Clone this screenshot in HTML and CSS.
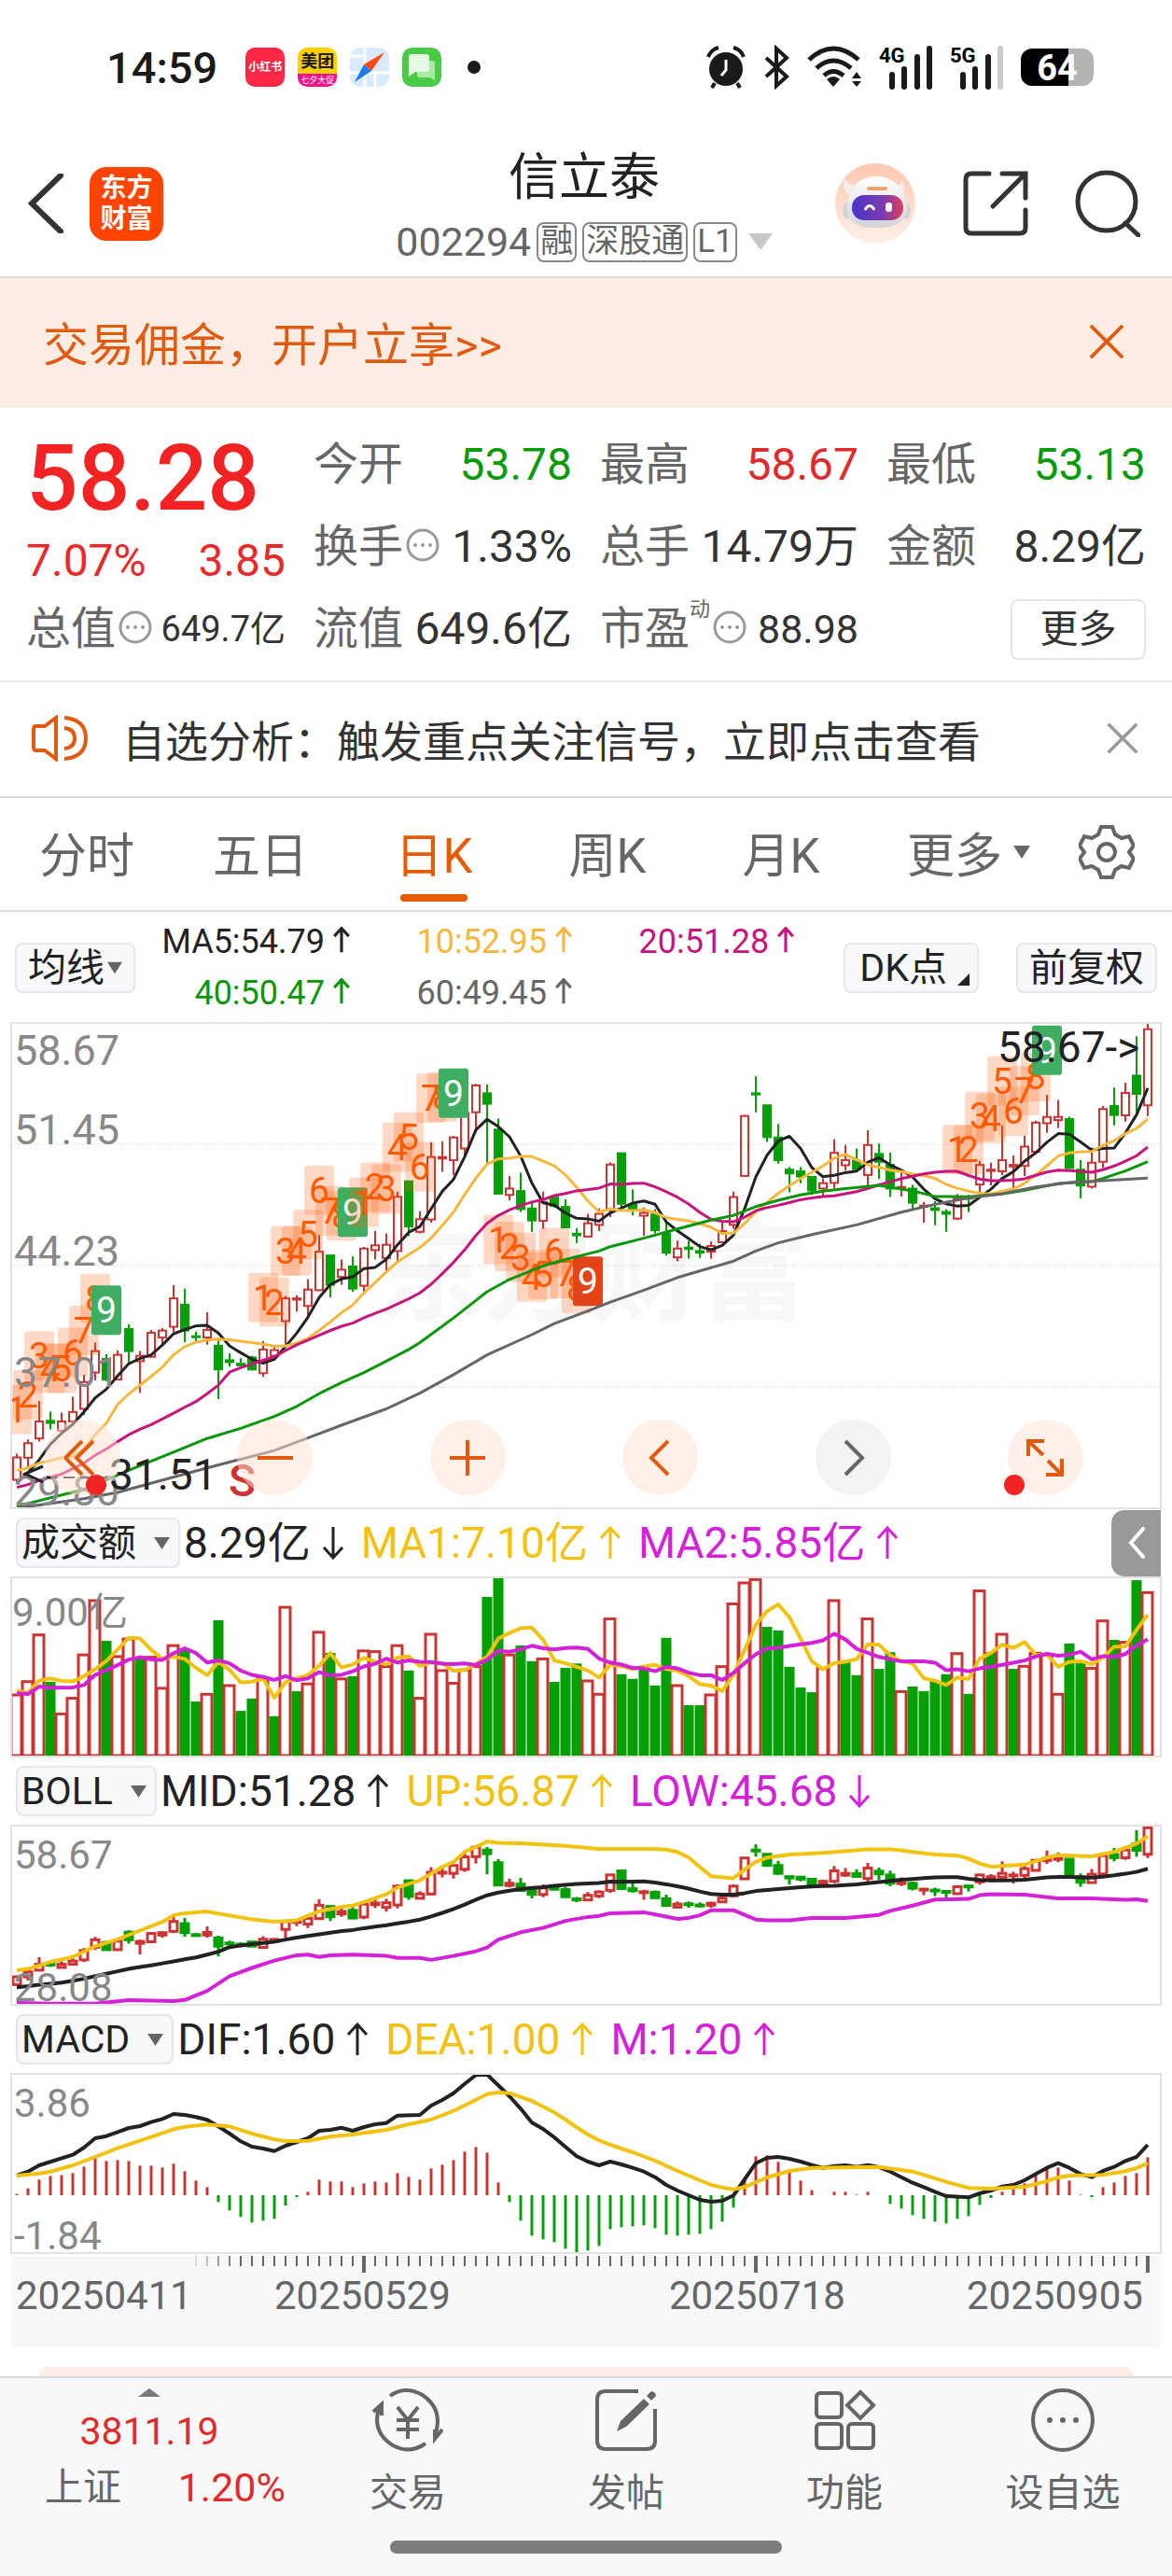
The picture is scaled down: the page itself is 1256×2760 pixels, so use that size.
FILE: index.html
```html
<!DOCTYPE html>
<html lang="zh-CN">
  <head>
    <meta charset="UTF-8" />
    <meta name="viewport" content="width=device-width, initial-scale=1.0" />
    <title>信立泰 002294</title>
    <link rel="stylesheet" href="styles.css">
  </head>
  <body>
    <svg class="defs" aria-hidden="true">
      <symbol id="up" viewBox="0 0 24 36"><path d="M12 35V2M2 13L12 2l10 11" /></symbol>
      <symbol id="down" viewBox="0 0 24 36"><path d="M12 1v33M2 23l10 11 10-11" /></symbol>
      <symbol id="info" viewBox="0 0 36 36">
        <circle cx="18" cy="18" r="16" />
        <circle class="dot" cx="10" cy="18" r="2" /><circle class="dot" cx="18" cy="18" r="2" /><circle class="dot" cx="26" cy="18" r="2" />
      </symbol>
      <symbol id="close" viewBox="0 0 40 40"><path d="M2 2l36 36M38 2L2 38" /></symbol>
    </svg>

    <div class="status-bar">
      <span class="time">14:59</span>
      <span class="app app-red">小红书</span>
      <span class="app app-yellow"><b>美团</b><i>七夕大促</i></span>
      <svg class="app" viewBox="0 0 42 42">
        <rect width="42" height="42" rx="10" fill="#d8eafb" />
        <path d="M16 0v42M0 27h42M27 26v16M0 9h14" stroke="#fff" stroke-width="3" />
        <path d="M37 5L15 18l8 7z" fill="#ff4a12" />
        <path d="M5 37l10-19 8 7z" fill="#1b7cf2" />
      </svg>
      <svg class="app" viewBox="0 0 42 42">
        <rect width="42" height="42" rx="10" fill="#4bcb45" />
        <path d="M19 14h13q3 0 3 3v18l-5-3H19q-3 0-3-3V17q0-3 3-3z" fill="#a9e8a5" />
        <path d="M10 7h16q3 0 3 3v13q0 3-3 3H14l-7 5V10q0-3 3-3z" fill="#e6f9e4" />
      </svg>
      <span class="more-dot"></span>
      <div class="status-right">
        <svg width="44" height="46" viewBox="0 0 44 46">
          <circle cx="22" cy="25" r="18" fill="#1a1a1a" />
          <path d="M3 12q3-8 11-10M41 12q-3-8-11-10M10 40l-3 5M34 40l3 5" stroke="#1a1a1a" stroke-width="4" fill="none" />
          <path d="M22 15v11l-5 6" stroke="#fff" stroke-width="3" fill="none" />
        </svg>
        <svg width="28" height="46" viewBox="0 0 28 46"><path d="M3 13l22 20-11 10V3l11 10L3 33" stroke="#1a1a1a" stroke-width="4" fill="none" /></svg>
        <svg width="60" height="46" viewBox="0 0 60 46">
          <path d="M3 15q26-24 53 0M11 24q18-16 37 0M19 32q10-9 21 0" stroke="#1a1a1a" stroke-width="5" fill="none" />
          <path d="M29 44l-7-8q7-6 14 0zM54 28l5 7H49zM54 44l5-6H49z" fill="#1a1a1a" />
        </svg>
        <svg width="58" height="46" viewBox="0 0 58 46">
          <text x="0" y="18" class="net">4G</text>
          <path d="M14 44V31M27 44V25M41 44V12M54 44V3" class="bars" />
        </svg>
        <svg width="58" height="46" viewBox="0 0 58 46">
          <text x="0" y="18" class="net">5G</text>
          <path d="M14 44V31M27 44V25M41 44V12" class="bars" /><path d="M54 44V3" class="bars weak" />
        </svg>
        <span class="battery">64</span>
      </div>
    </div>

    <header class="header">
      <div class="header-left">
        <button aria-label="返回"><svg width="38" height="64" viewBox="0 0 38 64"><path d="M35 2L4 32l31 30" class="ico thick" /></svg></button>
        <a class="logo" href="#">东方<br>财富</a>
      </div>
      <div class="header-title">
        <h1>信立泰</h1>
        <div class="code">
          <span>002294</span><span class="tag">融</span><span class="tag">深股通</span><span class="tag">L1</span>
          <svg width="26" height="18" viewBox="0 0 26 18"><path d="M0 0h26L13 18z" fill="#c8c8c8" /></svg>
        </div>
      </div>
      <div class="header-right">
        <button aria-label="助手">
          <svg width="88" height="88" viewBox="0 0 88 88">
            <defs>
              <linearGradient id="halo" x2="0" y2="1"><stop stop-color="#fdc8b0" /><stop offset="1" stop-color="#fff0e9" /></linearGradient>
              <linearGradient id="head" x2="0" y2="1"><stop stop-color="#ffffff" /><stop offset="1" stop-color="#d3d2d8" /></linearGradient>
              <linearGradient id="visor"><stop stop-color="#4a35c8" /><stop offset="0.6" stop-color="#7a3bb0" /><stop offset="1" stop-color="#e0405e" /></linearGradient>
            </defs>
            <circle cx="44" cy="44" r="43" fill="url(#halo)" />
            <path d="M11 17q-4 12 6 18l8-9q-9-1-14-9zM73 20q5 9-2 16l-8-9q7-1 10-7z" fill="#f3edec" />
            <ellipse cx="14" cy="52" rx="5" ry="9" fill="#d4d3d9" /><ellipse cx="77" cy="52" rx="5" ry="9" fill="#d4d3d9" />
            <path d="M14 50Q15 16 45 15q30 1 33 35-1 20-33 20T14 50z" fill="url(#head)" />
            <rect x="35" y="26" width="22" height="4" rx="2" fill="#eda56d" />
            <rect x="19" y="35" width="55" height="27" rx="13" fill="url(#visor)" />
            <path d="M33 51q5-9 10 0" stroke="#fff" stroke-width="3" fill="none" /><rect x="55" y="43" width="7" height="10" rx="3" fill="#fff" />
          </svg>
        </button>
        <button aria-label="分享">
          <svg width="70" height="70" viewBox="0 0 70 70"><path d="M28 3H9q-6 0-6 6v52q0 6 6 6h52q6 0 6-6V42M42 3h25v26M66 4L32 38" class="ico" /></svg>
        </button>
        <button aria-label="搜索">
          <svg width="70" height="72" viewBox="0 0 70 72"><circle cx="34" cy="34" r="31" class="ico" /><path d="M54 57l14 13" class="ico" /></svg>
        </button>
      </div>
    </header>

    <div class="banner">
      <a href="#">交易佣金，开户立享&gt;&gt;</a>
      <button aria-label="关闭"><svg width="38" height="38" class="x-icon"><use href="#close" /></svg></button>
    </div>

    <section class="quote">
      <div class="price-box">
        <div class="price">58.28</div>
        <div class="change"><span>7.07%</span><span>3.85</span></div>
      </div>
      <div class="item"><span>今开</span><b class="green">53.78</b></div>
      <div class="item"><span>最高</span><b class="red">58.67</b></div>
      <div class="item"><span>最低</span><b class="green">53.13</b></div>
      <div class="item"><span>换手</span><svg class="info"><use href="#info" /></svg><b>1.33%</b></div>
      <div class="item"><span>总手</span><b>14.79万</b></div>
      <div class="item"><span>金额</span><b>8.29亿</b></div>
      <div class="item"><span>总值</span><svg class="info"><use href="#info" /></svg><b class="small">649.7亿</b></div>
      <div class="item"><span>流值</span><b>649.6亿</b></div>
      <div class="item"><span>市盈</span><sup>动</sup><svg class="info"><use href="#info" /></svg><b class="medium">88.98</b></div>
      <div class="item"><button class="more-btn">更多</button></div>
    </section>

    <div class="notice">
      <svg width="60" height="50" viewBox="0 0 60 50"><path d="M26 3v44L14 38H5q-3 0-3-3V15q0-3 3-3h9zM35 3q23 2 23 22T35 47M35 14q11 1 11 11T35 36" /></svg>
      <p>自选分析：触发重点关注信号，立即点击查看</p>
      <button aria-label="关闭"><svg width="34" height="34" class="x-icon gray"><use href="#close" /></svg></button>
    </div>

    <nav class="tabs">
      <button>分时</button>
      <button>五日</button>
      <button class="active">日K</button>
      <button>周K</button>
      <button>月K</button>
      <button>更多<svg class="caret" width="18" height="14" viewBox="0 0 18 14"><path d="M0 0h18L9 14z" /></svg></button>
      <button class="gear" aria-label="设置">
        <svg width="60" height="60" viewBox="0 0 60 60">
          <path d="M24 3h12l3 8 7 4 8-2 5 10-5 7 5 7-5 10-8-2-7 4-3 8H24l-3-8-7-4-8 2L1 37l5-7-5-7L6 13l8 2 7-4z" /><circle cx="30" cy="30" r="9" />
        </svg>
      </button>
    </nav>

    <div class="ma-row">
      <button class="chip">均线<svg width="16" height="14" viewBox="0 0 18 14"><path d="M0 0h18L9 14z" /></svg></button>
      <div class="ma-values">
        <span>MA5:54.79<svg class="arrow"><use href="#up" /></svg></span>
        <span class="c-orange">10:52.95<svg class="arrow"><use href="#up" /></svg></span>
        <span class="c-pink">20:51.28<svg class="arrow"><use href="#up" /></svg></span>
        <span class="c-green">40:50.47<svg class="arrow"><use href="#up" /></svg></span>
        <span class="c-gray">60:49.45<svg class="arrow"><use href="#up" /></svg></span>
      </div>
      <button class="chip dk">DK点<svg width="13" height="13" viewBox="0 0 13 13"><path d="M13 0v13H0z" fill="#222" /></svg></button>
      <button class="chip">前复权</button>
    </div>

    <div class="chart main-chart">
      <svg id="kline" viewBox="0 0 1232 520"></svg>
      <div class="tools">
        <button aria-label="快退"><svg width="40" height="40" viewBox="0 0 40 40"><path d="M19 2L1 20l18 18M31 2L13 20l18 18" /></svg></button>
        <button aria-label="缩小"><svg width="40" height="40" viewBox="0 0 40 40"><path d="M1 20h38" /></svg></button>
        <button aria-label="放大"><svg width="40" height="40" viewBox="0 0 40 40"><path d="M1 20h38M20 1v38" /></svg></button>
        <button aria-label="左移"><svg width="40" height="40" viewBox="0 0 40 40"><path d="M28 2L10 20l18 18" /></svg></button>
        <button class="off" aria-label="右移"><svg width="40" height="40" viewBox="0 0 40 40"><path d="M12 2l18 18-18 18" /></svg></button>
        <button aria-label="全屏"><svg width="40" height="40" viewBox="0 0 40 40"><path d="M2 18V2h17M3 3l15 14M38 21v17H21M37 37L23 23" /></svg></button>
      </div>
    </div>

    <div class="ind-head">
      <button class="chip wide">成交额<svg width="17" height="15" viewBox="0 0 18 14"><path d="M0 0h18L9 14z" /></svg></button>
      <span>8.29亿<svg class="arrow big"><use href="#down" /></svg></span>
      <span class="c-yellow">MA1:7.10亿<svg class="arrow big"><use href="#up" /></svg></span>
      <span class="c-purple">MA2:5.85亿<svg class="arrow big"><use href="#up" /></svg></span>
      <button class="side-btn" aria-label="展开"><svg width="18" height="34" viewBox="0 0 18 34"><path d="M16 2L3 17l13 15" /></svg></button>
    </div>
    <div class="chart"><svg id="volume" viewBox="0 0 1232 192"></svg></div>

    <div class="ind-head">
      <button class="chip wide">BOLL<svg width="17" height="15" viewBox="0 0 18 14"><path d="M0 0h18L9 14z" /></svg></button>
      <span>MID:51.28<svg class="arrow big"><use href="#up" /></svg></span>
      <span class="c-yellow">UP:56.87<svg class="arrow big"><use href="#up" /></svg></span>
      <span class="c-purple">LOW:45.68<svg class="arrow big"><use href="#down" /></svg></span>
    </div>
    <div class="chart"><svg id="boll" viewBox="0 0 1232 192"></svg></div>

    <div class="ind-head">
      <button class="chip wide">MACD<svg width="17" height="15" viewBox="0 0 18 14"><path d="M0 0h18L9 14z" /></svg></button>
      <span>DIF:1.60<svg class="arrow big"><use href="#up" /></svg></span>
      <span class="c-yellow">DEA:1.00<svg class="arrow big"><use href="#up" /></svg></span>
      <span class="c-purple">M:1.20<svg class="arrow big"><use href="#up" /></svg></span>
    </div>
    <div class="chart"><svg id="macd" viewBox="0 0 1232 192"></svg></div>
    <div class="axis"><svg id="axis" viewBox="0 0 1232 98"></svg></div>

    <div class="next-card"></div>

    <footer class="bottom">
      <nav class="bottom-nav">
        <a class="index" href="#">
          <svg width="24" height="9" viewBox="0 0 24 9"><path d="M12 0l12 9H0z" fill="#77797e" /></svg>
          <strong>3811.19</strong>
          <span class="index-row"><span>上证</span><em>1.20%</em></span>
        </a>
        <a href="#">
          <svg width="76" height="68" viewBox="0 0 76 68"><path d="M19 8Q34-3 52 6q24 15 16 42M57 59Q40 71 22 61-2 46 8 18M1 25l9-8v12M75 44l-8 10V44M27 20l11 14 11-14M38 34v20M26 34h24M26 44h24" /></svg>
          交易
        </a>
        <a href="#">
          <svg width="68" height="68" viewBox="0 0 68 68"><path d="M47 3H12q-9 0-9 9v44q0 9 9 9h44q9 0 9-9V22" /><path class="fill" d="M24 46l4-11 25-24 6 6-25 24zM56 8l5-5q5 1 5 5l-5 5z" /></svg>
          发帖
        </a>
        <a href="#">
          <svg width="68" height="68" viewBox="0 0 68 68"><rect x="4" y="5" width="27" height="26" rx="4" /><rect x="4" y="38" width="27" height="26" rx="4" /><rect x="38" y="38" width="27" height="26" rx="4" /><path d="M51 4l14 14-14 14-14-14z" /></svg>
          功能
        </a>
        <a href="#">
          <svg width="68" height="68" viewBox="0 0 68 68"><circle cx="34" cy="34" r="32" /><circle class="fill" cx="20" cy="34" r="3" /><circle class="fill" cx="34" cy="34" r="3" /><circle class="fill" cx="48" cy="34" r="3" /></svg>
          设自选
        </a>
      </nav>
      <div class="home-bar"></div>
    </footer>

    <script src="script.js"></script>
  </body>
</html>
```
FILE: styles.css
```css
* {
  box-sizing: border-box;
}
body {
  margin: 0;
  background: #fff;
  color: #333;
  font-family: Roboto, "Noto Sans CJK SC", sans-serif;
}
button {
  padding: 0;
  border: none;
  background: none;
  color: inherit;
  font: inherit;
  cursor: pointer;
}
button svg {
  display: block;
}
a {
  color: inherit;
  text-decoration: none;
}
.defs {
  display: none;
}

/* status bar */
.status-bar {
  display: flex;
  align-items: center;
  gap: 14px;
  height: 144px;
  padding: 0 84px 0 114px;
  color: #1a1a1a;
}
.time {
  margin-right: 16px;
  font-size: 47px;
  font-weight: 500;
}
.app {
  width: 42px;
  height: 42px;
  border-radius: 10px;
  overflow: hidden;
  text-align: center;
}
.app-red {
  background: #ff2745;
  color: #fff;
  font-size: 12px;
  font-weight: 700;
  line-height: 42px;
}
.app-yellow {
  background: linear-gradient(#ffcf00 66%, #f0148c 66%);
}
.app-yellow b {
  display: block;
  font-size: 18px;
  line-height: 29px;
}
.app-yellow i {
  display: block;
  color: #fff;
  font-size: 9px;
  font-style: normal;
  line-height: 12px;
}
.more-dot {
  width: 14px;
  height: 14px;
  margin-left: 14px;
  border-radius: 50%;
  background: #1a1a1a;
}
.status-right {
  display: flex;
  align-items: center;
  gap: 18px;
  margin-left: auto;
}
.status-right svg {
  overflow: visible;
}
.net {
  font-size: 22px;
  font-weight: 700;
}
.bars {
  stroke: #1a1a1a;
  stroke-width: 6;
  stroke-linecap: round;
}
.weak {
  stroke: #ccc;
}
.battery {
  width: 78px;
  height: 40px;
  border-radius: 12px;
  background: linear-gradient(90deg, #000 66%, #b3b3b3 66%);
  color: #fff;
  font-size: 38px;
  font-weight: 700;
  line-height: 42px;
  text-align: center;
}

/* header */
.header {
  display: grid;
  grid-template-columns: 1fr auto 1fr;
  align-items: center;
  height: 154px;
  padding: 0 34px 4px 30px;
  border-bottom: 2px solid #ddd;
}
.header-left,
.header-right {
  display: flex;
  align-items: center;
}
.header-left {
  gap: 28px;
}
.header-right {
  justify-content: flex-end;
  gap: 50px;
}
.ico {
  fill: none;
  stroke: #333;
  stroke-width: 5;
  stroke-linecap: round;
}
.thick {
  stroke-width: 6;
}
.logo {
  width: 79px;
  height: 79px;
  padding-top: 6px;
  border-radius: 18px;
  background: #ff4400;
  color: #fff;
  font-size: 28px;
  font-weight: 700;
  line-height: 33px;
  text-align: center;
}
.header-title {
  padding-top: 6px;
  text-align: center;
}
h1 {
  margin: 0;
  color: #222;
  font-size: 54px;
  font-weight: 400;
  line-height: 76px;
}
.code {
  display: flex;
  align-items: center;
  justify-content: center;
  gap: 6px;
  height: 60px;
  color: #666;
  font-size: 43px;
}
.code svg {
  margin-left: 6px;
}
.tag {
  height: 43px;
  padding: 0 2px;
  border: 2px solid #888;
  border-radius: 8px;
  font-size: 35px;
  line-height: 38px;
}

.banner {
  display: flex;
  align-items: center;
  justify-content: space-between;
  height: 139px;
  padding: 0 51px 4px 46px;
  background: #fcede4;
  color: #e05a10;
  font-size: 49px;
}
.x-icon {
  fill: none;
  stroke: #e05a10;
  stroke-width: 4;
}
.x-icon.gray {
  stroke: #999;
}

/* quote */
.quote {
  display: grid;
  grid-template-columns: 278fr 277fr 277fr 278fr;
  grid-template-rows: 88px 88px 86px;
  column-gap: 30px;
  padding: 17px 28px 13px 28px;
  border-bottom: 2px solid #eee;
}
.price-box {
  grid-row: span 2;
  padding-top: 2px;
  color: #e82a2a;
}
.price {
  color: #f12323;
  font-size: 98px;
  font-weight: 500;
  line-height: 114px;
}
.change {
  display: flex;
  justify-content: space-between;
  font-size: 48px;
  line-height: 62px;
}
.item {
  display: flex;
  align-items: center;
  height: 88px;
  white-space: nowrap;
}
.item span {
  color: #666;
  font-size: 48px;
  line-height: 60px;
}
.item b {
  margin-left: auto;
  font-size: 48px;
  font-weight: 400;
  line-height: 60px;
}
.item .small {
  font-size: 38px;
}
.item .medium {
  font-size: 43px;
}
.item sup {
  align-self: flex-start;
  margin-top: 8px;
  color: #666;
  font-size: 22px;
  line-height: 30px;
}
.info {
  width: 36px;
  height: 36px;
  margin-left: 3px;
  margin-bottom: 4px;
  fill: none;
  stroke: #999;
  stroke-width: 3;
}
.dot {
  fill: #999;
  stroke: none;
}
.red {
  color: #e02b2b;
}
.green {
  color: #079a07;
}
.more-btn {
  width: 145px;
  height: 65px;
  margin-left: auto;
  border: 2px solid #e6e6e6;
  border-radius: 8px;
  font-size: 41px;
  line-height: 58px;
}

.notice {
  display: flex;
  align-items: center;
  height: 124px;
  padding: 0 36px 2px 34px;
  border-bottom: 2px solid #ddd;
  font-size: 46px;
}
.notice p {
  margin: 0 auto 0 37px;
}
.notice > svg {
  fill: none;
  stroke: #e05a10;
  stroke-width: 4;
}

/* period tabs */
.tabs {
  display: flex;
  height: 122px;
  border-bottom: 2px solid #ddd;
  color: #666;
  font-size: 51px;
}
.tabs button {
  position: relative;
  display: flex;
  flex: 186;
  align-items: center;
  justify-content: center;
  padding-bottom: 4px;
}
.tabs .gear {
  flex: 140;
}
.tabs svg {
  fill: #666;
}
.tabs .caret {
  margin-right: -30px;
  margin-left: 12px;
}
.gear svg {
  fill: none;
  stroke: #666;
  stroke-width: 4;
}
.tabs .active {
  color: #e65a00;
}
.tabs .active::after {
  content: "";
  position: absolute;
  bottom: 9px;
  left: calc(50% - 36px);
  width: 72px;
  height: 8px;
  border-radius: 4px;
  background: #e65a00;
}

/* indicator rows */
.chip {
  display: flex;
  align-items: center;
  justify-content: center;
  gap: 3px;
  height: 54px;
  padding: 0 12px;
  border: 2px solid #e4e6ea;
  border-radius: 8px;
  background: #f7f8fa;
  color: #222;
  font-size: 41px;
  line-height: 48px;
  white-space: nowrap;
}
.chip svg {
  fill: #666;
}
.wide {
  gap: 19px;
  padding: 0 9px 0 4px;
  margin-right: 4px;
}
.ma-row {
  display: flex;
  align-items: center;
  height: 119px;
  padding: 0 16px;
}
.ma-values {
  display: grid;
  flex: 1;
  grid-template-columns: 230fr 237fr 237fr 52fr;
  row-gap: 11px;
  color: #222;
  font-size: 36px;
  line-height: 44px;
}
.ma-values span {
  text-align: right;
}
.ma-values span:nth-child(4) {
  grid-column: 1;
}
.dk {
  margin-right: 40px;
  padding-left: 15px;
}
.dk svg {
  align-self: flex-end;
  margin: 0 -4px 6px 8px;
}
.arrow {
  width: 20px;
  height: 28px;
  margin-left: 8px;
  fill: none;
  stroke: currentColor;
  stroke-width: 4;
}
.arrow.big {
  width: 24px;
  height: 36px;
  margin-left: 12px;
  stroke-width: 3;
  vertical-align: -2px;
}
.ind-head {
  display: flex;
  align-items: center;
  height: 74px;
  padding-left: 17px;
  color: #222;
  font-size: 46px;
  line-height: 56px;
}
.ind-head span {
  margin-right: 18px;
}
.side-btn {
  display: flex;
  align-items: center;
  justify-content: center;
  width: 53px;
  height: 71px;
  margin: 0 12px 0 auto;
  border-radius: 14px 0 0 14px;
  background: #999;
}
.side-btn svg {
  fill: none;
  stroke: #fff;
  stroke-width: 4;
  stroke-linecap: round;
}
.c-orange {
  color: #f5b83d;
}
.c-pink {
  color: #c8147d;
}
.c-green {
  color: #0a960a;
}
.c-gray {
  color: #666;
}
.c-yellow {
  color: #f1c20f;
}
.c-purple {
  color: #d321d8;
}

/* charts */
.chart,
.axis {
  position: relative;
  margin: 0 12px;
}
.chart {
  outline: 2px solid #e2e2e2;
  outline-offset: -1px;
}
.chart > svg,
.axis > svg {
  display: block;
  width: 100%;
  overflow: hidden;
}
.line {
  fill: none;
  stroke-width: 4;
  stroke-linejoin: round;
}
.main-chart .line {
  stroke-width: 3;
}
.grid {
  stroke: #ccc;
  stroke-dasharray: 1 2;
}
.up {
  fill: #fff;
  stroke: #cb3433;
  stroke-width: 3;
}
.down {
  fill: #02a002;
  stroke: #02a002;
  stroke-width: 3;
}
.main-chart .up,
.main-chart .down {
  stroke-width: 2;
}
.scale {
  fill: #888;
  font-size: 45px;
}
.scale.sub {
  font-size: 42px;
}
.note {
  fill: #222;
  font-size: 46px;
}
.sell {
  fill: #cb3433;
  font-size: 48px;
  font-weight: 500;
}
.watermark {
  fill: #f7f7f7;
  font-size: 116px;
  font-weight: 700;
}
.turn {
  fill: #ff5f10;
  fill-opacity: 0.24;
}
.turn-text {
  fill: #ff5a00;
  font-size: 39px;
  text-anchor: middle;
}
.turn-text.nine {
  fill: #fff;
}
.date {
  fill: #666;
  font-size: 42px;
}
.tools {
  position: absolute;
  right: 83px;
  bottom: 14px;
  left: 36px;
  display: flex;
  justify-content: space-between;
}
.tools button {
  position: relative;
  display: flex;
  align-items: center;
  justify-content: center;
  width: 81px;
  height: 81px;
  border-radius: 50%;
  background: rgba(255, 225, 208, 0.5);
}
.tools svg {
  fill: none;
  stroke: #e05a10;
  stroke-width: 4;
}
.tools .off {
  background: #f3f3f3;
}
.tools .off svg {
  stroke: #666;
}
.tools button:first-child::after,
.tools button:last-child::after {
  content: "";
  position: absolute;
  bottom: 0;
  left: -4px;
  width: 22px;
  height: 22px;
  border-radius: 50%;
  background: #f12323;
}
.tools button:first-child::after {
  left: 44px;
}
.axis {
  margin-top: 3px;
  background: #f7f8fa;
}

.next-card {
  height: 10px;
  margin: 21px 42px 0;
  border-radius: 36px 36px 0 0;
  background: #fbede5;
}

/* bottom nav */
.bottom {
  padding-bottom: 25px;
  border-top: 2px solid #d8dadd;
  background: #f7f8fa;
}
.bottom-nav {
  display: flex;
  height: 174px;
  color: #666;
  font-size: 41px;
  line-height: 60px;
}
.bottom-nav a {
  display: flex;
  flex: 234;
  flex-direction: column;
  align-items: center;
  gap: 14px;
  padding-top: 11px;
}
.bottom-nav a > svg {
  fill: none;
  stroke: #666;
  stroke-width: 4;
}
.bottom-nav .fill {
  fill: #666;
  stroke: none;
}
.bottom-nav .index {
  flex: 320;
  gap: 0;
}
.bottom-nav .index > svg {
  margin-bottom: 7px;
  stroke: none;
}
.index strong {
  color: #e02b2b;
  font-size: 41px;
  font-weight: 400;
}
.index-row {
  display: flex;
  justify-content: space-between;
  width: 292px;
  padding-left: 34px;
}
.index em {
  color: #e02b2b;
  font-size: 43px;
  font-style: normal;
}
.home-bar {
  width: 420px;
  height: 14px;
  margin: 0 auto;
  border-radius: 7px;
  background: #7b7c7e;
}
```
FILE: script.js
```js
const COUNT = 102;
const STEP = 12;
const x = (i) => 6 + i * STEP;

// [type, high, body top, body bottom, low], type 1 = rise, 0 = fall
const candles = [
  [1,1380,1392,1463,1468],[1,1335,1347,1393,1425],[1,1213,1278,1332,1342],[0,1247,1276,1283,1303],[1,1250,1278,1307,1312],
  [1,1200,1248,1278,1290],[1,1130,1153,1238,1258],[1,1028,1055,1123,1148],[0,1065,1080,1145,1150],[1,1053,1067,1145,1147],
  [0,970,985,1055,1090],[1,1055,1070,1087,1188],[1,988,997,1073,1076],[1,982,990,1012,1035],[1,846,888,978,995],
  [0,857,908,990,1027],[0,993,1008,1011,1025],[1,932,988,1012,1035],[0,1018,1038,1113,1207],[0,1062,1084,1090,1104],
  [0,1078,1095,1100,1107],[0,1070,1075,1113,1117],[1,1023,1050,1125,1137],[1,1040,1052,1070,1080],[1,880,888,960,1035],
  [1,878,888,892,930],[1,827,860,912,948],[1,687,740,862,865],[0,750,752,845,885],[1,765,797,820,845],
  [0,755,787,857,867],[1,725,730,848,868],[1,675,720,735,765],[1,682,718,760,800],[1,550,566,738,770],
  [0,515,517,660,690],[1,612,637,677,682],[1,393,440,638,648],[1,390,440,445,487],[1,373,378,450,497],
  [1,250,300,413,435],[1,208,213,298,362],[0,210,238,271,460],[0,318,353,556,558],[1,500,540,560,578],
  [0,490,548,605,614],[0,585,603,641,677],[1,550,583,642,668],[0,563,567,595,600],[0,574,598,663,665],
  [0,665,683,688,712],[1,620,650,692,694],[1,603,620,655,675],[1,457,464,605,630],[0,426,428,588,600],
  [0,543,590,608,625],[1,600,617,626,690],[0,605,622,672,682],[0,645,682,743,752],[1,705,730,758,770],
  [0,705,727,731,762],[0,715,738,743,760],[1,708,722,740,762],[1,648,675,710,712],[1,550,567,655,667],
  [1,306,310,500,503],[0,184,238,242,298],[0,275,276,377,392],[0,335,378,450,461],[0,472,480,492,552],
  [0,472,485,502,523],[0,500,503,546,560],[1,508,523,540,562],[1,383,427,522,540],[1,402,450,466,483],
  [0,413,452,478,485],[1,355,402,497,532],[0,397,430,455,510],[0,426,465,540,567],[1,487,535,540,565],
  [0,528,540,585,605],[1,582,594,598,648],[0,580,602,608,656],[0,605,614,620,677],[1,557,572,635,640],
  [0,560,565,572,615],[1,452,465,527,552],[1,458,480,484,530],[1,340,450,485,497],[1,435,465,470,542],
  [1,373,407,468,500],[1,325,331,423,428],[1,243,313,333,363],[1,260,313,323,348],[0,312,320,475,477],
  [0,450,480,530,571],[1,410,458,534,540],[1,278,288,455,475],[0,220,278,307,340],[1,204,237,308,328],
  [0,57,182,240,298],[1,15,35,276,310]
];

// bar tops, negative = falling day
const volumes = [
  570,530,390,-535,627,580,450,287,-412,455,402,-460,457,550,422,-435,-594,568,-350,542,
  -622,-585,520,-638,307,-563,537,382,-448,522,-518,438,440,485,422,-501,580,388,497,535,
  495,485,-280,-224,450,-426,-473,462,-535,-493,-480,528,568,342,-512,-526,-487,-546,-403,542,
  -605,-605,570,485,297,234,224,-370,-381,-490,-552,-566,490,287,-470,-515,342,-496,-446,560,
  -549,-563,-532,-512,446,-571,258,-446,388,-496,484,445,450,568,-420,-475,490,348,-409,412,
  -230,263
];

const macdBars = [
  4,22,50,62,65,71,92,118,110,113,110,95,95,89,101,77,47,26,-22,-49,-70,-88,-82,-76,-33,-6,11,50,44,44,
  26,38,44,41,71,59,50,86,98,113,140,155,137,41,-22,-82,-130,-142,-151,-172,-187,-178,-163,-109,-103,-100,-97,-106,-127,-130,
  -127,-124,-109,-85,-40,50,125,128,107,77,47,16,0,11,11,2,11,0,-28,-43,-64,-76,-85,-91,-76,-67,-31,-9,11,20,
  38,65,85,89,47,2,-6,26,41,62,71,122
];

// lines as index, value, index, value...
const ma40 = [0,1547,6,1493,9,1448,11,1418,14,1375,17,1332,20,1300,23,1262,25,1230,27,1190,29,1155,31,1123,33,1087,35,1050,36,1028,39,950,42,867,44,828,47,785,49,765,52,738,53,724,56,697,59,668,62,640,64,625,66,597,68,577,70,560,72,548,74,540,77,530,80,547,82,565,85,566,88,557,90,545,93,524,96,518,97,508,99,484,101,455];
const ma60 = [0,1553,6,1523,9,1503,17,1425,23,1370,26,1330,29,1290,33,1238,36,1188,39,1130,42,1067,46,1003,48,968,51,928,53,900,56,862,59,822,64,770,66,738,68,712,71,686,75,655,79,615,82,590,85,570,88,556,91,535,94,521,97,515,101,507];
const bollUp = [0,1400,1,1396,3,1375,5,1360,7,1328,9,1307,11,1281,13,1255,14,1235,15,1229,17,1224,19,1236,21,1247,23,1254,25,1250,27,1223,29,1210,30,1206,31,1195,33,1172,34,1152,36,1130,38,1090,39,1075,40,1045,41,1030,42,1014,43,1018,45,1019,49,1027,52,1036,57,1036,58,1038,59,1045,60,1062,62,1118,64,1124,65,1098,66,1075,67,1062,69,1053,72,1048,76,1037,78,1037,79,1040,80,1045,82,1053,84,1056,85,1065,86,1080,87,1089,90,1083,92,1062,93,1055,96,1058,98,1045,100,1020,101,998];
const bollLow = [0,1498,3,1500,7,1500,10,1490,14,1492,15,1489,17,1462,19,1418,21,1393,23,1371,25,1355,26,1353,27,1360,28,1355,30,1353,33,1357,34,1363,36,1363,37,1369,39,1357,41,1343,42,1332,43,1308,45,1286,47,1273,49,1252,51,1240,52,1237,53,1229,56,1226,58,1239,59,1246,60,1243,61,1235,62,1220,64,1220,66,1248,67,1250,69,1250,71,1243,74,1243,77,1234,78,1222,80,1206,82,1188,85,1186,86,1175,87,1172,90,1173,93,1184,96,1184,99,1189,100,1187,101,1192];
const dif = [0,540,1,527,2,507,5,473,6,450,7,420,8,413,9,400,10,387,11,381,12,368,13,358,14,342,15,345,16,352,17,361,18,382,19,405,20,430,21,447,22,453,23,461,24,444,25,432,26,420,27,396,28,393,29,386,30,396,31,384,32,375,33,371,34,347,36,345,37,315,38,297,39,275,40,245,41,217,42,215,43,250,44,285,45,325,46,370,47,390,48,417,49,448,50,478,51,495,52,507,53,495,54,504,55,515,56,527,57,545,58,570,59,588,60,603,61,618,62,624,63,621,64,604,65,552,66,500,67,483,68,480,69,486,70,495,71,506,72,515,73,509,74,507,75,512,76,506,77,513,78,527,79,545,80,563,81,577,82,592,83,606,85,610,86,597,87,588,88,575,89,570,90,555,91,535,92,515,93,500,94,515,95,535,96,545,97,525,98,512,99,493,100,480,101,441];
const dea = [0,540,2,533,3,527,5,507,7,480,9,452,12,416,14,391,15,383,17,376,19,382,21,405,23,424,24,429,26,428,28,415,30,408,33,393,35,375,37,360,39,332,41,296,42,278,43,272,44,275,46,300,48,337,49,360,50,385,51,408,52,427,53,441,55,465,57,492,59,525,62,570,63,578,64,584,65,577,67,546,69,525,71,515,75,513,77,512,80,527,83,560,85,580,87,582,90,576,92,558,93,546,94,540,97,538,99,526,100,516,101,500];

// nine-turn marks: first candle index, then the height of each mark
const turns = [
  { start: 0, y: [1239,1192,1069,1108,1108,1058,988,887,924], color: "#3fae63" },
  { start: 22, y: [884,898,736,736,684,544,609,625,613], color: "#3fae63" },
  { start: 31, y: [582,534,540,407,375,470,252,248,236], color: "#3fae63" },
  { start: 43, y: [700,722,756,819,811,741,808,856,832], color: "#df4518" },
  { start: 84, y: [415,415,309,316,197,294,229,184,100], color: "#3fae63" }
];

// ----------------------------------------------------------------------
// HELPERS
// ----------------------------------------------------------------------

const price = (v) => (v - 15) / 2.958;
const bollPrice = (v) => price(v) * 0.348;
const vol = (v) => (v - 220) / 2.8;
const boll = (v) => (v - 966) / 2.8;
const macd = (v) => (v - 213) / 3;

// moving average, the first points come from earlier days
function average(values, n, seed) {
  return values.map((v, i) => {
    if (i < seed.length) return seed[i];
    const part = values.slice(i - n + 1, i + 1);
    return part.reduce((a, b) => a + b, 0) / n;
  });
}

function line(points, color) {
  return `<polyline class="line" stroke="${color}" points="${points.join(" ")}"/>`;
}

function denseLine(values, scale, color) {
  return line(values.map((v, i) => `${x(i)},${scale(v).toFixed(1)}`), color);
}

function sparseLine(pairs, scale, color) {
  const points = [];
  for (let k = 0; k < pairs.length; k += 2) {
    points.push(`${x(pairs[k])},${scale(pairs[k + 1]).toFixed(1)}`);
  }
  return line(points, color);
}

function drawCandles(scale) {
  return candles
    .map(([rise, high, top, bottom, low], i) => {
      const [h, t, b, l] = [high, top, bottom, low].map(scale);
      const body = Math.max(b - t, 1);
      return (
        `<g class="${rise ? "up" : "down"}"><path d="M${x(i)} ${h}V${t}M${x(i)} ${b}V${l}"/>` +
        `<rect x="${x(i) - 4}" y="${t}" width="8" height="${body}"/></g>`
      );
    })
    .join("");
}

function label(text, px, py, cls) {
  return `<text x="${px}" y="${py}" class="${cls}">${text}</text>`;
}

// ----------------------------------------------------------------------
// CHARTS
// ----------------------------------------------------------------------

const closes = candles.map((c) => (c[0] ? c[2] : c[3]));
const ma5 = average(closes, 5, [1473,1440,1400,1350]);
const ma10 = average(closes, 10, [1433,1425,1410,1402,1393,1388,1365,1320,1283]);
const ma20 = average(closes, 20, [1487,1478,1465,1455,1445,1428,1410,1385,1365,1342,1320,1303,1288,1270,1252,1233,1215,1190,1163]);

function drawTurns() {
  return turns
    .map((group) =>
      group.y
        .map((v, k) => {
          const cx = x(group.start + k);
          const cy = price(v);
          const nine = k === 8;
          return (
            `<rect x="${cx - 16}" y="${cy - 26}" width="32" height="53" rx="3" ` +
            (nine ? `fill="${group.color}"` : 'class="turn"') +
            `/>` + label(k + 1, cx, cy + 14, nine ? "turn-text nine" : "turn-text")
          );
        })
        .join("")
    )
    .join("");
}

document.getElementById("kline").innerHTML =
  label("东方财富", 390, 310, "watermark") +
  [130, 260, 390].map((y) => `<path class="grid" d="M0 ${y}H1232"/>`).join("") +
  drawCandles(price) +
  drawTurns() +
  denseLine(ma5, price, "#222") +
  denseLine(ma10, price, "#f5b83d") +
  denseLine(ma20, price, "#c8147d") +
  sparseLine(ma40, price, "#0a960a") +
  sparseLine(ma60, price, "#666") +
  label("58.67", 3, 45, "scale") +
  label("51.45", 3, 130, "scale") +
  label("44.23", 3, 260, "scale") +
  label("37.01", 3, 390, "scale") +
  label("29.80", 3, 517, "scale") +
  '<path d="M34 475L15 483l19 9" stroke="#222" stroke-width="3" fill="none"/>' +
  '<path d="M38 487H103" stroke="#222" stroke-width="2" stroke-dasharray="12 6"/>' +
  label("31.51", 105, 500, "note") +
  label("S", 233, 507, "sell") +
  label("58.67-&gt;", 1057, 42, "note");

document.getElementById("volume").innerHTML =
  volumes
    .map((v, i) => {
      const top = vol(Math.abs(v));
      return v < 0
        ? `<rect class="down" x="${x(i) - 4}" y="${top + 1}" width="8" height="${190 - top}"/>`
        : `<rect class="up" x="${x(i) - 6}" y="${top + 1}" width="11" height="${190 - top}"/>`;
    })
    .join("") +
  label("9.00亿", 1, 52, "scale sub") +
  denseLine(average(volumes.map(Math.abs), 5, [560,566,530,523]), vol, "#f1c20f") +
  denseLine(average(volumes.map(Math.abs), 10, [568,570,548,551,551,550,543,513,498]), vol, "#d321d8");

document.getElementById("boll").innerHTML =
  drawCandles(bollPrice) +
  sparseLine(bollUp, boll, "#f1c20f") +
  denseLine(ma20, bollPrice, "#222") +
  sparseLine(bollLow, boll, "#d321d8") +
  label("58.67", 3, 46, "scale sub") +
  label("28.08", 3, 188, "scale sub");

document.getElementById("macd").innerHTML =
  macdBars
    .map((v, i) => `<path class="${v < 0 ? "down" : "up"}" d="M${x(i)} 130v${-v / 3}"/>`)
    .join("") +
  sparseLine(dif, macd, "#222") +
  sparseLine(dea, macd, "#f1c20f") +
  label("3.86", 3, 46, "scale sub") +
  label("-1.84", 3, 188, "scale sub");

// time axis
let ticks = "";
for (let i = 16; i < COUNT; i++) {
  const major = i === 31 || i === 66 || i === 101;
  const opacity = Math.min(1, (i - 15) / 5);
  ticks += `<path d="M${x(i)} 0v${major ? 18 : 11}" stroke="#666" stroke-width="${major ? 4 : 2}" opacity="${opacity}"/>`;
}
document.getElementById("axis").innerHTML =
  ticks +
  label("20250411", 5, 57, "date") +
  label("20250529", 282, 57, "date") +
  label("20250718", 705, 57, "date") +
  label("20250905", 1024, 57, "date");
```
